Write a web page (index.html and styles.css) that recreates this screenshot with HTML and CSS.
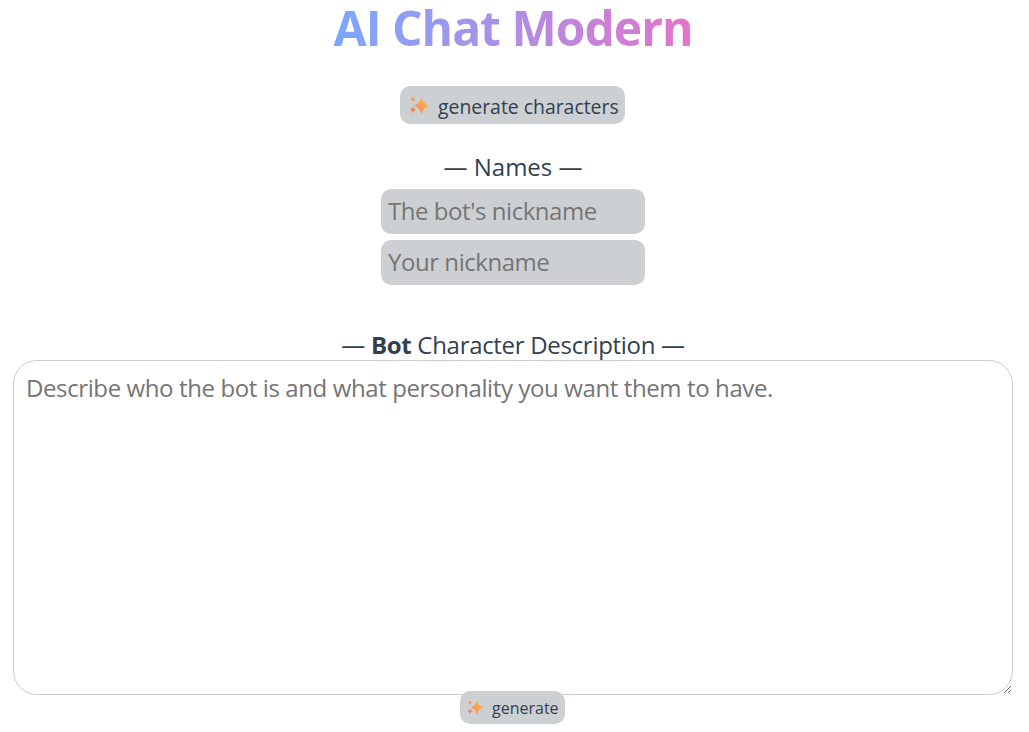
FILE: index.html
```html
<!DOCTYPE html>
<html lang="en">
<head>
    <meta charset="UTF-8">
    <meta name="viewport" content="width=device-width, initial-scale=1.0">
    <title>AI Chat Modern</title>
    <link rel="stylesheet" href="styles.css">
</head>
<body>
    <svg class="defs" width="0" height="0" aria-hidden="true">
        <defs>
            <linearGradient id="sparkle-fill" x1="1" y1="0" x2="0" y2="1">
                <stop offset="0" stop-color="#ffc04d"/>
                <stop offset="1" stop-color="#f7845a"/>
            </linearGradient>
            <symbol id="sparkle" viewBox="0 0 20 20">
                <path fill="url(#sparkle-fill)" d="M12.300 1.500C13.600 5.600 15 7.500 19 9.500 15 11.500 13.600 13.400 12.300 17.500 11 13.400 9.600 11.500 5.600 9.500 9.600 7.500 11 5.600 12.300 1.500z"/>
                <path fill="#f7845a" d="M4.500 10.300C5 12.100 5.800 12.900 7.700 13.500 5.800 14.100 5 14.900 4.500 17 4 14.900 3.200 14.100 1.300 13.500 3.200 12.900 4 12.100 4.500 10.300z"/>
                <path fill="#f99a5a" d="M4.500 1.400C4.900 2.900 5.500 3.500 7.100 4 5.500 4.500 4.900 5.100 4.500 6.600 4.100 5.100 3.500 4.500 1.900 4 3.500 3.500 4.100 2.900 4.500 1.400z"/>
            </symbol>
        </defs>
    </svg>

    <main class="page">
        <h1 class="title">AI Chat Modern</h1>

        <button class="btn btn-large" type="button">
            <svg class="sparkle"><use href="#sparkle"/></svg>
            generate characters
        </button>

        <section class="names">
            <div class="label">— Names —</div>
            <input class="name-input" type="text" placeholder="The bot's nickname">
            <input class="name-input" type="text" placeholder="Your nickname">
        </section>

        <section class="description">
            <div class="label">— <b>Bot</b> Character Description —</div>
            <textarea class="description-input" placeholder="Describe who the bot is and what personality you want them to have."></textarea>
            <button class="btn btn-small" type="button">
                <svg class="sparkle"><use href="#sparkle"/></svg>
                generate
            </button>
        </section>
    </main>
</body>
</html>
```

FILE: styles.css
```css
body {
    margin: 0;
    font-family: "Open Sans", "Noto Sans", sans-serif;
    color: #323f52;
    background: white;
}

.defs {
    position: absolute;
}

.page {
    display: flex;
    flex-direction: column;
    align-items: center;
    padding-right: 3px;
}

.title {
    margin: 0;
    height: 56px;
    padding: 0 2px;
    font-size: 48px;
    line-height: 56px;
    font-weight: 700;
    letter-spacing: -1px;
    background: linear-gradient(90deg, #7aa8ff 0%, #e573c9 100%);
    -webkit-background-clip: text;
    background-clip: text;
    color: transparent;
}

.btn {
    display: flex;
    align-items: center;
    border: none;
    background: #cdd0d3;
    color: #323f52;
    font-family: inherit;
    cursor: pointer;
}

.btn-large {
    margin: 30px 1px 0 0;
    width: 225px;
    height: 38px;
    padding: 2px 0 0 8px;
    border-radius: 10px;
    font-size: 19.4px;
}

.btn-large .sparkle {
    width: 22px;
    height: 22px;
    margin-right: 8px;
}

.btn-small {
    margin-right: 1px;
    width: 105px;
    height: 33px;
    padding: 0 0 0 6px;
    border-radius: 10px;
    font-size: 16px;
}

.btn-small .sparkle {
    width: 18px;
    height: 18px;
    margin-right: 8px;
}

.names {
    margin-top: 26px;
    display: flex;
    flex-direction: column;
    align-items: center;
}

.label {
    height: 39px;
    font-size: 24px;
    line-height: 34px;
    white-space: nowrap;
}

.name-input {
    box-sizing: border-box;
    width: 264px;
    height: 45px;
    padding: 0 7px 2px;
    margin-bottom: 6px;
    border: none;
    border-radius: 10px;
    background: #cdd0d3;
    font-family: inherit;
    font-size: 24px;
    letter-spacing: -0.45px;
}

.name-input::placeholder,
.description-input::placeholder {
    color: #757575;
    opacity: 1;
}

.description {
    margin-top: 36px;
    display: flex;
    flex-direction: column;
    align-items: center;
}

.description .label {
    height: 33px;
    line-height: 36px;
    letter-spacing: -0.3px;
}

.description-input {
    box-sizing: border-box;
    display: block;
    width: 1000px;
    height: 335px;
    margin: 0 0 -4px;
    padding: 11px 12px;
    border: 1px solid #ccc;
    border-radius: 24px;
    font-family: inherit;
    font-size: 24px;
    line-height: 32px;
    letter-spacing: -0.39px;
}
```
